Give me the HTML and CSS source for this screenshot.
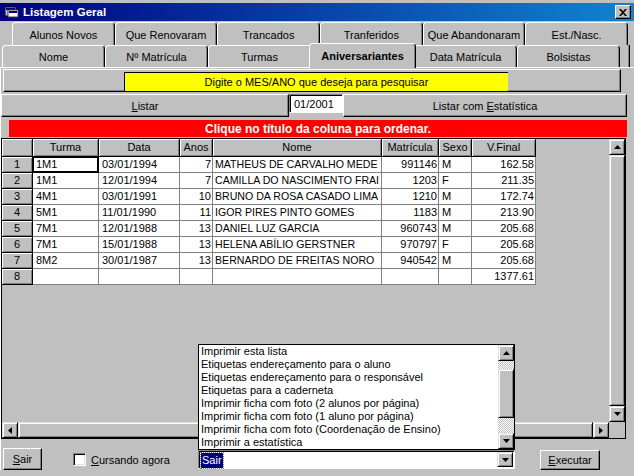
FILE: index.html
```html
<!DOCTYPE html>
<html>
<head>
<meta charset="utf-8">
<title>Listagem Geral</title>
<link rel="stylesheet" href="styles.css">
</head>
<body>
<div class="window">
  <div class="titlebar">
    <span class="ticon">
      <svg width="14" height="12" viewBox="0 0 14 12">
        <rect x="0" y="1" width="11" height="9" fill="#c0c0c0" stroke="#000" stroke-width="1"/>
        <rect x="1" y="2" width="9" height="2" fill="#000080"/>
        <rect x="3" y="4" width="10" height="7" fill="#fff" stroke="#404040" stroke-width="1"/>
        <rect x="4" y="5" width="8" height="2" fill="#000080"/>
      </svg>
    </span>
    <span class="ttext">Listagem Geral</span>
    <span class="close">
      <svg width="8" height="7" viewBox="0 0 8 7">
        <path d="M0 0h2l2 2.2L6 0h2L5 3.5L8 7H6L4 4.8L2 7H0l3-3.5z" fill="#000"/>
      </svg>
    </span>
  </div>

  <div class="tabs">
    <div class="tabrow back">
      <div class="tab">Alunos Novos</div>
      <div class="tab">Que Renovaram</div>
      <div class="tab">Trancados</div>
      <div class="tab">Tranferidos</div>
      <div class="tab">Que Abandonaram</div>
      <div class="tab">Est./Nasc.</div>
    </div>
    <div class="tabrow front">
      <div class="tab">Nome</div>
      <div class="tab">Nº Matrícula</div>
      <div class="tab">Turmas</div>
      <div class="tab sel">Aniversariantes</div>
      <div class="tab">Data Matrícula</div>
      <div class="tab">Bolsistas</div>
      <div class="tabtail"></div>
    </div>
  </div>

  <div class="page">
    <div class="searchpanel">
      <div class="yellow">Digite o MES/ANO que deseja para pesquisar</div>
    </div>

    <div class="listrow">
      <div class="btn listar"><span><u>L</u>istar</span></div>
      <div class="input">01/2001</div>
      <div class="btn listarest"><span>Listar com <u>E</u>statística</span></div>
    </div>

    <div class="redlabel">Clique no título da coluna para ordenar.</div>

    <div class="grid">
      <div class="gridtop">
        <div class="cellarea">
          <div class="cells">
            <div class="h corner"></div>
            <div class="h">Turma</div>
            <div class="h">Data</div>
            <div class="h">Anos</div>
            <div class="h">Nome</div>
            <div class="h">Matrícula</div>
            <div class="h">Sexo</div>
            <div class="h">V.Final</div>

            <div class="h rh">1</div><div class="c focus">1M1</div><div class="c">03/01/1994</div><div class="c r">7</div><div class="c nm">MATHEUS DE CARVALHO MEDE</div><div class="c r">991146</div><div class="c">M</div><div class="c r">162.58</div>
            <div class="h rh">2</div><div class="c">1M1</div><div class="c">12/01/1994</div><div class="c r">7</div><div class="c nm">CAMILLA DO NASCIMENTO FRAI</div><div class="c r">1203</div><div class="c">F</div><div class="c r">211.35</div>
            <div class="h rh">3</div><div class="c">4M1</div><div class="c">03/01/1991</div><div class="c r">10</div><div class="c nm">BRUNO DA ROSA CASADO LIMA</div><div class="c r">1210</div><div class="c">M</div><div class="c r">172.74</div>
            <div class="h rh">4</div><div class="c">5M1</div><div class="c">11/01/1990</div><div class="c r">11</div><div class="c nm">IGOR PIRES PINTO GOMES</div><div class="c r">1183</div><div class="c">M</div><div class="c r">213.90</div>
            <div class="h rh">5</div><div class="c">7M1</div><div class="c">12/01/1988</div><div class="c r">13</div><div class="c nm">DANIEL LUZ GARCIA</div><div class="c r">960743</div><div class="c">M</div><div class="c r">205.68</div>
            <div class="h rh">6</div><div class="c">7M1</div><div class="c">15/01/1988</div><div class="c r">13</div><div class="c nm">HELENA ABÍLIO GERSTNER</div><div class="c r">970797</div><div class="c">F</div><div class="c r">205.68</div>
            <div class="h rh">7</div><div class="c">8M2</div><div class="c">30/01/1987</div><div class="c r">13</div><div class="c nm">BERNARDO DE FREITAS NORO</div><div class="c r">940542</div><div class="c">M</div><div class="c r">205.68</div>
            <div class="h rh">8</div><div class="c"></div><div class="c"></div><div class="c"></div><div class="c"></div><div class="c"></div><div class="c"></div><div class="c r">1377.61</div>
          </div>
        </div>
        <div class="vscroll">
          <div class="sbtn"><svg width="7" height="4" viewBox="0 0 7 4"><path d="M3.5 0L7 4H0z" fill="#000"/></svg></div>
          <div class="thumb"></div>
          <div class="sbtn"><svg width="7" height="4" viewBox="0 0 7 4"><path d="M0 0h7L3.5 4z" fill="#000"/></svg></div>
        </div>
      </div>
      <div class="hscroll">
        <div class="sbtn"><svg width="4" height="7" viewBox="0 0 4 7"><path d="M0 3.5L4 0v7z" fill="#000"/></svg></div>
        <div class="thumb"></div>
        <div class="sbtn"><svg width="4" height="7" viewBox="0 0 4 7"><path d="M0 0l4 3.5L0 7z" fill="#000"/></svg></div>
        <div class="scorner"></div>
      </div>
    </div>

    <div class="bottom">
      <div class="btn sair"><span><u>S</u>air</span></div>
      <div class="check">
        <span class="box"></span>
        <span class="clabel"><u>C</u>ursando agora</span>
      </div>
      <div class="combo">
        <div class="droplist">
          <div class="items">
            <div>Imprimir esta lista</div>
            <div>Etiquetas endereçamento para o aluno</div>
            <div>Etiquetas endereçamento para o responsável</div>
            <div>Etiquetas para a caderneta</div>
            <div>Imprimir ficha com foto (2 alunos por página)</div>
            <div>Imprimir ficha com foto (1 aluno por página)</div>
            <div>Imprimir ficha com foto (Coordenação de Ensino)</div>
            <div>Imprimir a estatística</div>
          </div>
          <div class="lscroll">
            <div class="sbtn"><svg width="7" height="4" viewBox="0 0 7 4"><path d="M3.5 0L7 4H0z" fill="#000"/></svg></div>
            <div class="dither d1"></div>
            <div class="thumb"></div>
            <div class="dither d2"></div>
            <div class="sbtn"><svg width="7" height="4" viewBox="0 0 7 4"><path d="M0 0h7L3.5 4z" fill="#000"/></svg></div>
          </div>
        </div>
        <div class="cfield"><span class="selected">Sair</span></div>
        <div class="sbtn cbtn"><svg width="7" height="4" viewBox="0 0 7 4"><path d="M0 0h7L3.5 4z" fill="#000"/></svg></div>
      </div>
      <div class="btn exec"><span><u>E</u>xecutar</span></div>
    </div>
  </div>
</div>
</body>
</html>
```

FILE: styles.css
```css
* { box-sizing: border-box; }
html, body { margin: 0; padding: 0; }
body {
  width: 634px;
  height: 476px;
  overflow: hidden;
  background: #c0c0c0;
  font-family: "Liberation Sans", Arial, sans-serif;
  font-size: 11px;
  color: #000;
}
u { text-decoration: underline; text-underline-offset: 1px; }

.window { padding-top: 3px; }

/* title bar */
.titlebar {
  height: 18px;
  background: linear-gradient(to right, #000080, #1084d0);
  display: flex;
  align-items: center;
  padding-left: 5px;
  color: #fff;
  font-weight: bold;
  font-size: 11.5px;
}
.ticon { width: 14px; height: 12px; margin-right: 4px; display: flex; }
.ttext { flex: 1; }
.close {
  width: 16px;
  height: 14px;
  margin-right: 3px;
  background: #c0c0c0;
  border: 1px solid;
  border-color: #fff #000 #000 #fff;
  box-shadow: inset -1px -1px #808080;
  display: flex;
  align-items: center;
  justify-content: center;
}

/* tabs */
.tabs { margin-top: 1px; }
.tabrow { display: flex; align-items: flex-start; }
.tabrow.back { height: 23px; padding-left: 12px; }
.tabrow.back .tab { width: calc(616px / 6); height: 23px; }
.tabrow.front { height: 22px; padding-left: 2px; }
.tabrow.front .tab { width: 103px; height: 22px; }
.tab {
  flex: none;
  background: #c0c0c0;
  border: 1px solid #fff;
  border-bottom: none;
  border-right-color: #000;
  border-radius: 4px 4px 0 0;
  box-shadow: inset -1px 0 #808080;
  display: flex;
  align-items: center;
  justify-content: center;
  padding-top: 1px;
  white-space: nowrap;
}
.tabrow.front .tab.sel {
  font-weight: bold;
  width: 107px;
  height: 25px;
  margin: -2px -2px 0;
  position: relative;
  z-index: 1;
  padding-top: 0;
}
.tabtail {
  width: 10px;
  height: 22px;
  border-right: 1px solid #000;
  box-shadow: inset -1px 0 #808080;
}

/* page */
.page {
  border-top: 1px solid #fff;
  border-left: 1px solid #fff;
}
.searchpanel {
  margin: 1px 0 0 2px;
  width: 618px;
  height: 23px;
  border: 1px solid;
  border-color: #fff #000 #000 #fff;
  box-shadow: inset -1px -1px #808080;
  padding: 2px 0 0 120px;
}
.yellow {
  width: 384px;
  height: 19px;
  background: #ffff00;
  border-top: 1px solid #000;
  border-left: 1px solid #000;
  display: flex;
  align-items: center;
  justify-content: center;
  padding-bottom: 1px;
}

.listrow {
  display: flex;
  align-items: flex-start;
  margin-top: 2px;
}
.btn {
  background: #c0c0c0;
  border: 1px solid;
  border-color: #fff #000 #000 #fff;
  box-shadow: inset -1px -1px #808080;
  display: flex;
  align-items: center;
  justify-content: center;
  white-space: nowrap;
}
.listar { width: 288px; height: 23px; }
.listarest { width: 284px; height: 23px; }
.input {
  width: 54px;
  height: 19px;
  background: #fff;
  border: 1px solid;
  border-color: #808080 #fff #fff #808080;
  box-shadow: inset 1px 1px #000;
  padding: 1px 0 0 4px;
  line-height: 16px;
}

.redlabel {
  margin: 3px 0 0 8px;
  width: 618px;
  height: 17px;
  background: #ff0000;
  color: #fff;
  font-weight: bold;
  font-size: 12px;
  display: flex;
  align-items: center;
  justify-content: center;
}

/* grid */
.grid {
  margin-top: 1px;
  width: 625px;
  height: 301px;
  border: 1px solid #000;
  display: flex;
  flex-direction: column;
}
.gridtop { flex: 1; display: flex; min-height: 0; }
.cellarea { flex: 1; background: #c0c0c0; overflow: hidden; }
.cells {
  display: grid;
  grid-template-columns: 31px 66px 81px 33px 169px 57px 33px 64px;
  grid-template-rows: 18px repeat(8, 16px);
}
.c {
  background: #fff;
  border-right: 1px solid #808080;
  border-bottom: 1px solid #808080;
  padding: 0 2px 0 3px;
  white-space: nowrap;
  overflow: hidden;
  line-height: 15px;
}
.c.nm { font-size: 10.6px; padding: 0 0 0 2px; }
.c.r { text-align: right; padding-right: 1px; }
.c.focus {
  border-right: 2px solid #000;
  border-bottom: 2px solid #000;
  box-shadow: inset 1px 1px #000;
  line-height: 14px;
}
.h {
  background: #c0c0c0;
  border-right: 1px solid #000;
  border-bottom: 1px solid #000;
  box-shadow: inset 1px 1px #fff, inset -1px -1px #808080;
  text-align: center;
  line-height: 17px;
  white-space: nowrap;
  overflow: hidden;
}
.h.rh { line-height: 15px; }

.sbtn {
  width: 16px;
  height: 16px;
  flex: none;
  background: #c0c0c0;
  border: 1px solid;
  border-color: #dfdfdf #000 #000 #dfdfdf;
  box-shadow: inset 1px 1px #fff, inset -1px -1px #808080;
  display: flex;
  align-items: center;
  justify-content: center;
}
.thumb {
  flex: 1;
  background: #c0c0c0;
  border: 1px solid;
  border-color: #dfdfdf #000 #000 #dfdfdf;
  box-shadow: inset 1px 1px #fff, inset -1px -1px #808080;
}
.vscroll { width: 16px; display: flex; flex-direction: column; }
.hscroll { height: 16px; display: flex; }
.scorner { width: 16px; background: #c0c0c0; }

/* bottom */
.bottom {
  display: flex;
  align-items: flex-start;
  margin-top: 9px;
}
.sair { width: 39px; height: 22px; margin-left: 2px; }
.check {
  width: 125px;
  margin-left: 31px;
  margin-top: 5px;
  display: flex;
  align-items: center;
}
.box {
  width: 13px;
  height: 13px;
  background: #fff;
  border: 1px solid;
  border-color: #808080 #fff #fff #808080;
  box-shadow: inset 1px 1px #000, inset -1px -1px #dfdfdf;
}
.clabel { margin-left: 5px; }

.combo {
  position: relative;
  width: 317px;
  height: 19px;
  margin-top: 2px;
  display: flex;
  background: #fff;
  border: 1px solid;
  border-color: #808080 #fff #fff #808080;
  box-shadow: inset 1px 1px #000;
  padding: 1px;
}
.cfield { flex: 1; padding: 1px 0 0 1px; }
.selected {
  display: inline-block;
  background: #000080;
  color: #fff;
  height: 15px;
  line-height: 14px;
  padding: 0 1px;
  outline: 1px dotted #808080;
}
.cbtn { height: 15px; }

.droplist {
  position: absolute;
  left: -1px;
  bottom: 100%;
  width: 317px;
  height: 106px;
  background: #fff;
  border: 1px solid #000;
  display: flex;
  margin-bottom: 1px;
}
.items { flex: 1; padding-left: 2px; }
.items div { height: 13px; line-height: 13px; white-space: nowrap; }
.lscroll { width: 16px; display: flex; flex-direction: column; }
.dither {
  background: repeating-conic-gradient(#fff 0 25%, #c0c0c0 0 50%) 0 0 / 2px 2px;
}
.d1 { height: 8px; }
.d2 { height: 15px; }

.exec { width: 60px; height: 20px; margin-left: 25px; margin-top: 2px; }
```
